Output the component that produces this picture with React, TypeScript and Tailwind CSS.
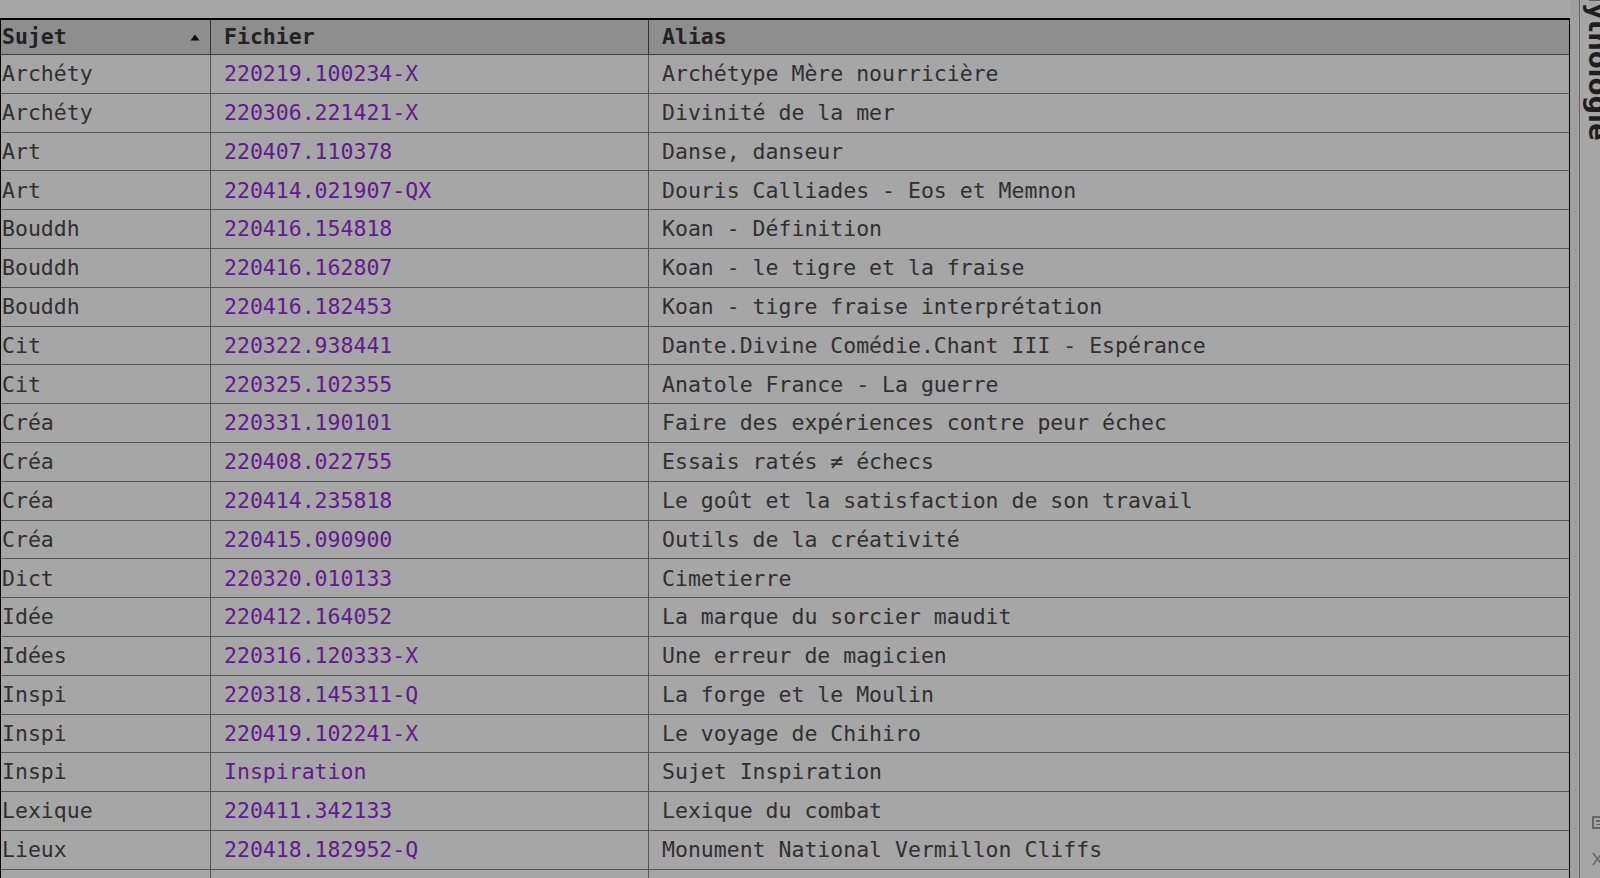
const rows: [string, string, string][] = [
    ["Archéty", "220219.100234-X", "Archétype Mère nourricière"],
    ["Archéty", "220306.221421-X", "Divinité de la mer"],
    ["Art", "220407.110378", "Danse, danseur"],
    ["Art", "220414.021907-QX", "Douris Calliades - Eos et Memnon"],
    ["Bouddh", "220416.154818", "Koan - Définition"],
    ["Bouddh", "220416.162807", "Koan - le tigre et la fraise"],
    ["Bouddh", "220416.182453", "Koan - tigre fraise interprétation"],
    ["Cit", "220322.938441", "Dante.Divine Comédie.Chant III - Espérance"],
    ["Cit", "220325.102355", "Anatole France - La guerre"],
    ["Créa", "220331.190101", "Faire des expériences contre peur échec"],
    ["Créa", "220408.022755", "Essais ratés ≠ échecs"],
    ["Créa", "220414.235818", "Le goût et la satisfaction de son travail"],
    ["Créa", "220415.090900", "Outils de la créativité"],
    ["Dict", "220320.010133", "Cimetierre"],
    ["Idée", "220412.164052", "La marque du sorcier maudit"],
    ["Idées", "220316.120333-X", "Une erreur de magicien"],
    ["Inspi", "220318.145311-Q", "La forge et le Moulin"],
    ["Inspi", "220419.102241-X", "Le voyage de Chihiro"],
    ["Inspi", "Inspiration", "Sujet Inspiration"],
    ["Lexique", "220411.342133", "Lexique du combat"],
    ["Lieux", "220418.182952-Q", "Monument National Vermillon Cliffs"],
    ["", "", ""],
];

const mono = "font-['DejaVu_Sans_Mono','Liberation_Mono',monospace]";

export default function App() {
    return (
        <div className={`h-screen w-full overflow-hidden bg-[#a6a6a6] flex text-[#303030] ${mono}`}>
            {/* table area */}
            <div className="w-[1570px] pt-[18px]">
                <div className="border-t-2 border-l border-r-[1.5px] border-black">
                    {/* header */}
                    <div className="grid grid-cols-[210px_438px_1fr] h-[35px] bg-[#8e8e8e] border-b border-[#3a3a3a] text-[21.5px] font-bold text-[#222]">
                        <div className="flex items-center justify-between pl-[1px] pr-[10px] border-r border-[#333]">
                            <span>Sujet</span>
                            <svg width="10" height="7" viewBox="0 0 10 7">
                                <path d="M5 0.5 L9.5 6.5 L0.5 6.5 Z" fill="#111" />
                            </svg>
                        </div>
                        <div className="flex items-center pl-[13px] border-r border-[#333]">Fichier</div>
                        <div className="flex items-center pl-[13px]">Alias</div>
                    </div>

                    {/* body */}
                    {rows.map(([sujet, fichier, alias], i) => (
                        <div
                            key={i}
                            className="grid grid-cols-[210px_438px_1fr] h-[38.8px] border-b border-[#555] text-[21.5px] leading-none"
                        >
                            <div className="flex items-center pl-[1px] border-r border-[#555] whitespace-nowrap overflow-hidden">
                                {sujet}
                            </div>
                            <div className="flex items-center pl-[13px] border-r border-[#555] text-[#5f1a8e]">
                                {fichier}
                            </div>
                            <div className="flex items-center pl-[13px] whitespace-pre">{alias}</div>
                        </div>
                    ))}
                </div>
            </div>

            {/* gutter */}
            <div className="w-[10px] bg-[#a0a0a0] border-r border-[#666]" />

            {/* side panel */}
            <div className="flex-1 relative">
                <div className="absolute left-[5px] top-[-23px] [writing-mode:vertical-rl] font-['DejaVu_Sans',sans-serif] font-bold text-[26px] leading-none text-[#1e1e1e] whitespace-nowrap">
                    Mythologie
                </div>
                <div className="absolute left-[12px] top-[816px] w-[12px] h-[13px] border-2 border-[#666] flex flex-col justify-center gap-[2px] px-[2px]">
                    <div className="h-[1.5px] bg-[#666]" />
                    <div className="h-[1.5px] bg-[#666]" />
                </div>
                <svg className="absolute left-[12px] top-[852px]" width="12" height="14" viewBox="0 0 12 14">
                    <path d="M1 1 L10 13 M10 1 L1 13" stroke="#666" strokeWidth="1.5" fill="none" />
                </svg>
            </div>
        </div>
    );
}
